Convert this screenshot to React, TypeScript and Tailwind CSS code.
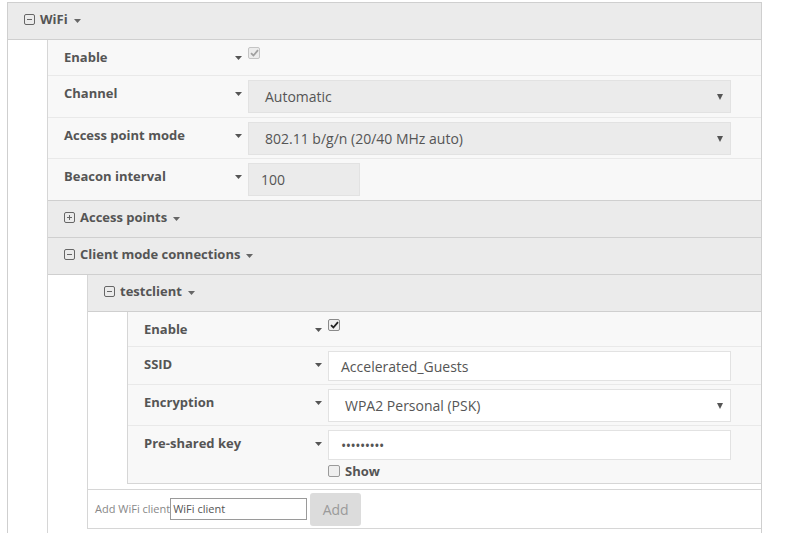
import React from "react"

const font = "font-['Open_Sans',_'Liberation_Sans',_sans-serif]"

function BoxIcon({ open }: { open: boolean }) {
  return (
    <svg width="11" height="11" viewBox="0 0 11 11" className="shrink-0">
      <rect x="0.5" y="0.5" width="10" height="10" rx="1.5" fill="none" stroke="#666" />
      <line x1="3" y1="5.5" x2="8" y2="5.5" stroke="#666" />
      {!open && <line x1="5.5" y1="3" x2="5.5" y2="8" stroke="#666" />}
    </svg>
  )
}

function Caret({ color = "#666" }: { color?: string }) {
  return (
    <svg width="7" height="4" viewBox="0 0 7 4">
      <path d="M0 0 L7 0 L3.5 4 Z" fill={color} />
    </svg>
  )
}

function Header({
  title,
  open = true,
  top = false,
  h = "h-[37px]",
}: {
  title: string
  open?: boolean
  top?: boolean
  h?: string
}) {
  return (
    <div
      className={`${h} shrink-0 flex items-center pl-[16px] pb-[3px] bg-[#ebebeb] border-b border-[#cfcfcf] ${
        top ? "border-t" : ""
      }`}
    >
      <BoxIcon open={open} />
      <span className="ml-[5px] text-[13px] font-bold text-[#555] leading-none">{title}</span>
      <span className="ml-[6px] mt-[3px] flex">
        <Caret />
      </span>
    </div>
  )
}

function Check({ checked, disabled }: { checked: boolean; disabled?: boolean }) {
  return (
    <span
      className={`w-[12px] h-[12px] rounded-[2px] border flex items-center justify-center ${
        disabled ? "border-[#c4c4c4] bg-[#ececec]" : "border-[#8a8a8a] bg-[#efefef]"
      }`}
    >
      {checked && (
        <svg width="9" height="8" viewBox="0 0 9 8">
          <path
            d="M1 4.2 L3.4 6.5 L8 1.2"
            fill="none"
            stroke={disabled ? "#a0a0a0" : "#222"}
            strokeWidth="1.8"
          />
        </svg>
      )}
    </span>
  )
}

function Row({
  label,
  h,
  last = false,
  children,
}: {
  label: string
  h: string
  last?: boolean
  children: React.ReactNode
}) {
  return (
    <div
      className={`${h} shrink-0 flex items-start pt-[4px] pl-[16px] bg-[#f8f8f8] ${
        last ? "" : "border-b border-[#e9e9e9]"
      }`}
    >
      <div className="w-[168px] pt-[3px] leading-[20px] text-[13px] font-bold text-[#555]">{label}</div>
      <div className="w-[13px] h-[20px] mt-[4px] flex items-center justify-center">
        <Caret color="#555" />
      </div>
      <div className="ml-[3px] flex-1 mr-[30px]">{children}</div>
    </div>
  )
}

function Select({ value, white = false }: { value: string; white?: boolean }) {
  return (
    <div
      className={`h-[33px] flex items-center justify-between pl-[16px] pr-[7px] border text-[14px] text-[#555] ${
        white ? "bg-white border-[#e2e2e2]" : "bg-[#ebebeb] border-[#e2e2e2]"
      }`}
    >
      <span>{value}</span>
      <svg width="6" height="6" viewBox="0 0 6 6">
        <path d="M0 0 L6 0 L3 6 Z" fill="#555" />
      </svg>
    </div>
  )
}

export default function App() {
  return (
    <div className={`${font} h-[533px] pt-[2px] bg-white overflow-hidden`}>
      <div className="ml-[7px] w-[755px] h-[531px] border-x border-t border-[#cfcfcf] flex flex-col">
        <Header title="WiFi" />
        <div className="flex-1 pl-[39px] flex">
          <div className="flex-1 border-l border-[#d6d6d6] flex flex-col">
            <Row label="Enable" h="h-[36px]">
              <div className="mt-[3px]">
                <Check checked disabled />
              </div>
            </Row>
            <Row label="Channel" h="h-[42px]">
              <Select value="Automatic" />
            </Row>
            <Row label="Access point mode" h="h-[41px]">
              <Select value="802.11 b/g/n (20/40 MHz auto)" />
            </Row>
            <Row label="Beacon interval" h="h-[41px]" last>
              <div className="w-[112px] h-[33px] flex items-center pl-[12px] bg-[#ebebeb] border border-[#e2e2e2] text-[14px] text-[#555]">
                100
              </div>
            </Row>
            <Header title="Access points" open={false} top h="h-[38px]" />
            <Header title="Client mode connections" />
            <div className="pl-[39px] flex">
              <div className="flex-1 border-l border-[#d6d6d6] flex flex-col">
                <Header title="testclient" />
                <div className="pl-[39px] pb-[5px]">
                  <div className="border-l border-b border-[#d6d6d6]">
                    <Row label="Enable" h="h-[35px]">
                      <div className="mt-[3px]">
                        <Check checked />
                      </div>
                    </Row>
                    <Row label="SSID" h="h-[38px]">
                      <div className="h-[30px] flex items-center pl-[12px] bg-white border border-[#e2e2e2] text-[14px] text-[#555]">
                        Accelerated_Guests
                      </div>
                    </Row>
                    <Row label="Encryption" h="h-[41px]">
                      <Select value="WPA2 Personal (PSK)" white />
                    </Row>
                    <Row label="Pre-shared key" h="h-[57px]" last>
                      <div className="h-[30px] flex items-center pl-[12px] bg-white border border-[#e2e2e2] text-[14px] text-[#555] tracking-[-0.5px]">
                        •••••••••
                      </div>
                      <div className="mt-[4px] flex items-center">
                        <span className="w-[12px] h-[12px] rounded-[2px] border border-[#9a9a9a] bg-[#efefef]" />
                        <span className="ml-[5px] text-[13px] font-bold text-[#555] leading-[14px]">Show</span>
                      </div>
                    </Row>
                  </div>
                </div>
                <div className="h-[40px] flex items-center pl-[7px] bg-white border-y border-[#d6d6d6]">
                  <span className="text-[11px] text-[#888]">Add WiFi client</span>
                  <div className="w-[137px] h-[22px] flex items-center pl-[2px] border border-[#9a9a9a] text-[11px] text-[#555]">
                    WiFi client
                  </div>
                  <div className="ml-[3px] w-[51px] h-[33px] rounded-[3px] bg-[#dcdcdc] flex items-center justify-center text-[14px] text-[#9a9a9a]">
                    Add
                  </div>
                </div>
              </div>
            </div>
          </div>
        </div>
      </div>
    </div>
  )
}
